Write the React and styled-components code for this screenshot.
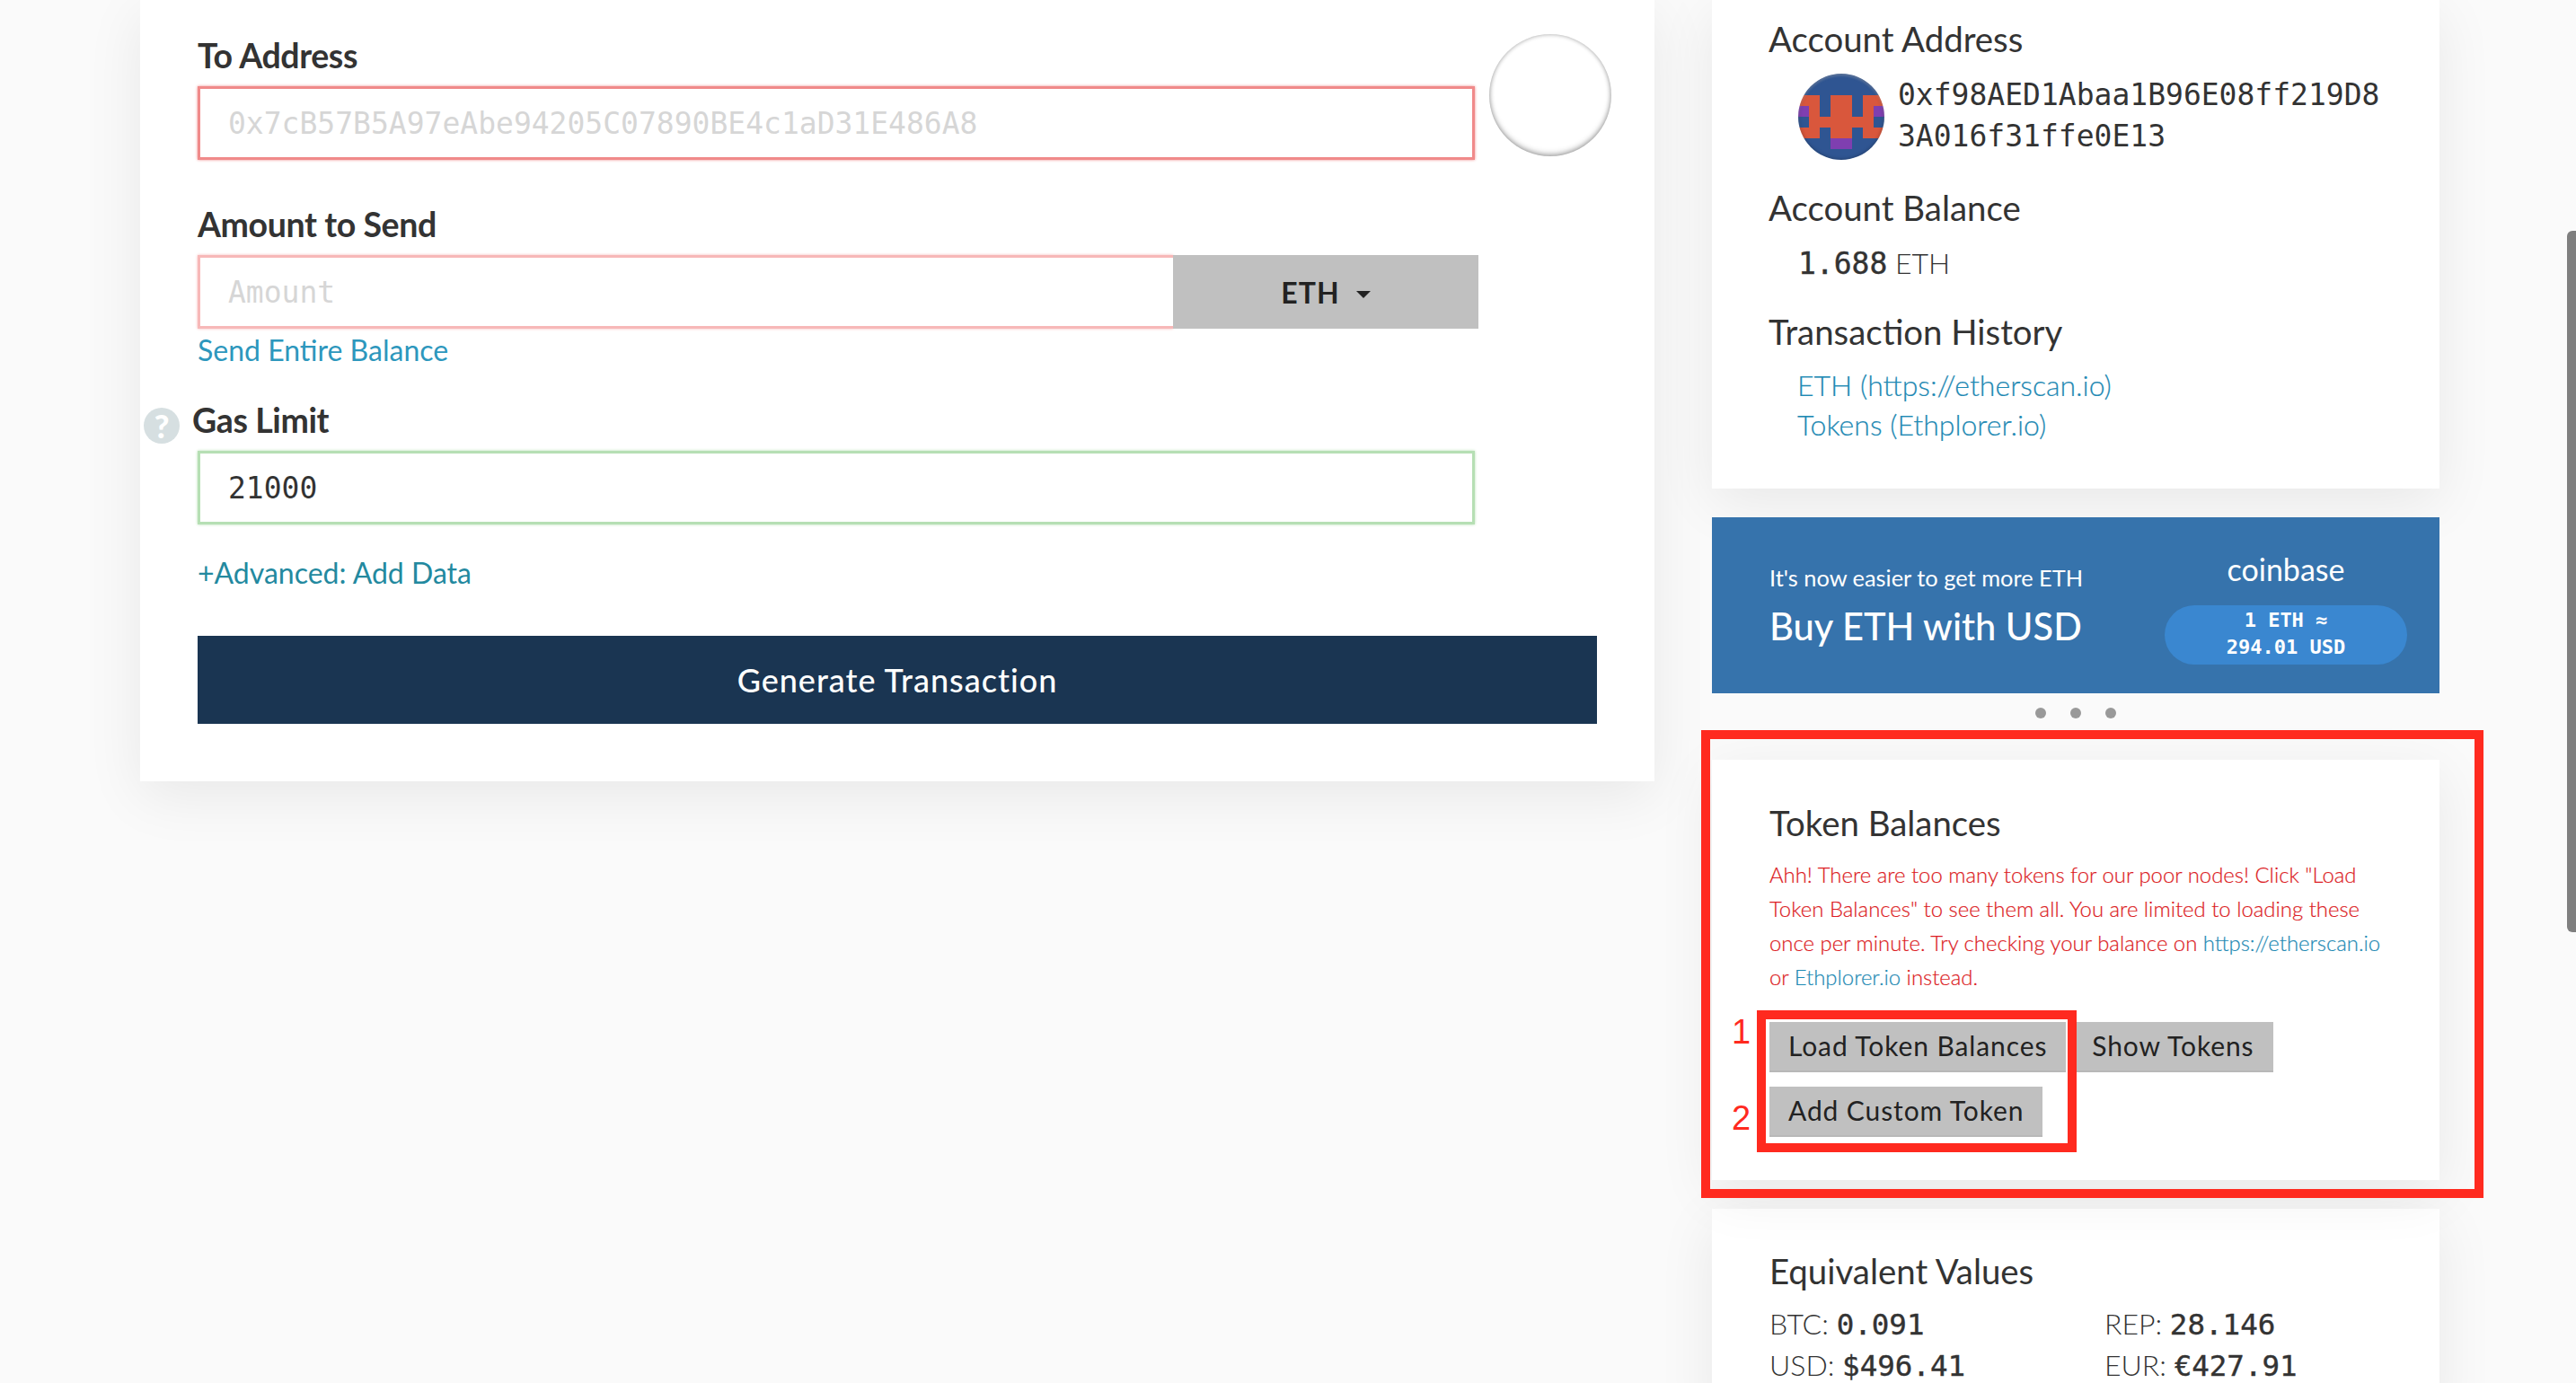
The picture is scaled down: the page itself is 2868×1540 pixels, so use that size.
import React from 'react';
import styled, { createGlobalStyle } from 'styled-components';

const lato = `Lato, "Open Sans", sans-serif`;
const mono = `"DejaVu Sans Mono", "Liberation Mono", monospace`;
const linkBlue = '#2d97bd';
const marker = '#ff2a1f';

const GlobalStyle = createGlobalStyle`
  html, body {
    margin: 0;
    height: 1540px;
    overflow: hidden;
    background: #fafafa;
  }
  * { box-sizing: border-box; }
`;

const Page = styled.div`
  display: grid;
  grid-template-columns: 1686px 810px;
  column-gap: 64px;
  align-items: start;
  padding-left: 156px;
  height: 1540px;
  overflow: hidden;
  font-family: ${lato};
  color: #333;
`;

const Card = styled.section`
  background: #fff;
  box-shadow: 0 16px 60px rgba(0, 0, 0, 0.075);
`;

const FormCard = styled(Card)`
  padding: 39px 64px 64px;
`;

const Label = styled.label`
  display: block;
  font-size: 37.5px;
  line-height: 46px;
  font-weight: 700;
  letter-spacing: -0.4px;
  margin-top: ${p => p.$top || 0}px;
  margin-bottom: 11px;
`;

const AddressRow = styled.div`
  display: flex;
  align-items: flex-start;
`;

const Blockie = styled.div`
  flex: none;
  width: 136px;
  height: 136px;
  margin: -58px 0 0 16px;
  border-radius: 50%;
  background: #fff;
  box-shadow: inset 0 0 5px rgba(0, 0, 0, 0.3), inset 0 -3px 6px rgba(0, 0, 0, 0.22);
`;

const Field = styled.input`
  display: block;
  flex: none;
  width: ${p => p.$width}px;
  height: 82px;
  padding: 0 31px;
  background: #fff;
  border: 3px solid ${p => p.$tone};
  border-right-width: ${p => (p.$flush ? 0 : 3)}px;
  box-shadow: 0 0 3px ${p => p.$tone};
  border-radius: 0;
  outline: none;
  font-family: ${mono};
  font-size: 33px;
  color: #333;
  &::placeholder { color: #d6d6d6; opacity: 1; }
`;

const InputGroup = styled.div`
  display: flex;
  width: 1426px;
`;

const CurrencyButton = styled.div`
  flex: 1;
  display: flex;
  align-items: center;
  justify-content: center;
  gap: 18px;
  height: 82px;
  background: #c0c0c0;
  font-size: 32px;
  font-weight: 700;
  letter-spacing: 1px;
  color: #222;
`;

const Caret = styled.span`
  width: 0;
  height: 0;
  margin-top: 6px;
  border-left: 8px solid transparent;
  border-right: 8px solid transparent;
  border-top: 8px solid #222;
`;

const TextLink = styled.a`
  display: block;
  font-size: 32px;
  line-height: 48px;
  color: ${p => p.$tone || linkBlue};
  margin-top: ${p => p.$top || 0}px;
`;

const GasRow = styled.div`
  display: flex;
  align-items: flex-start;
  gap: 14px;
  margin: 31px 0 8px -60px;
`;

const HelpBadge = styled.span`
  width: 40px;
  height: 40px;
  margin-top: 9px;
  border-radius: 50%;
  background: #d6dfe1;
  color: #fff;
  font-size: 36px;
  font-weight: 900;
  line-height: 40px;
  text-align: center;
`;

const GasLabel = styled(Label)`
  margin: 0;
`;

const GenerateButton = styled.button`
  display: block;
  width: 100%;
  height: 98px;
  margin-top: 46px;
  border: 0;
  background: #1a3552;
  color: #fff;
  font-family: ${lato};
  font-size: 36px;
  font-weight: 500;
  letter-spacing: 1px;
`;

const Sidebar = styled.aside`
  display: flex;
  flex-direction: column;
`;

const AccountCard = styled(Card)`
  padding: 20px 63px 49px;
`;

const Heading = styled.h3`
  margin: ${p => p.$top || 0}px 0 0;
  font-size: 38.4px;
  line-height: 46px;
  font-weight: 400;
  color: #333;
`;

const AccountRow = styled.div`
  display: flex;
  gap: 15px;
  margin: 16px 0 0 33px;
`;

const Identicon = styled.div`
  position: relative;
  width: 96px;
  height: 96px;
  flex: none;
  border-radius: 50%;
  overflow: hidden;
  &::after {
    content: '';
    position: absolute;
    inset: 0;
    border-radius: 50%;
    box-shadow: inset 0 0 4px rgba(0, 0, 0, 0.35), inset 0 2px 3px rgba(255, 255, 255, 0.3);
  }
`;

const AddressText = styled.div`
  width: 545px;
  margin-top: 1px;
  font-family: ${mono};
  font-size: 33px;
  line-height: 46px;
  word-break: break-all;
  color: #333;
`;

const BalanceRow = styled.div`
  margin: 16px 0 0 33px;
  font-size: 32px;
  line-height: 46px;
  font-weight: 300;
`;

const Mono = styled.span`
  font-family: ${mono};
  font-size: ${p => p.$size || 32.5}px;
  line-height: 1;
  font-weight: 400;
  -webkit-text-stroke: 0.4px #333;
  color: #333;
`;

const LinkList = styled.div`
  margin: 15px 0 0 32px;
`;

const ThinLink = styled.a`
  display: block;
  font-size: 32px;
  line-height: 44px;
  font-weight: 300;
  -webkit-text-stroke: 0.2px #1f8ab4;
  color: #1f8ab4;
`;

const Banner = styled.div`
  display: flex;
  justify-content: space-between;
  height: 196px;
  margin-top: 32px;
  padding: 0 36px 0 64px;
  background: #3673ac;
  color: #fff;
`;

const BannerPitch = styled.div`
  padding-top: 47px;
`;

const PitchLine = styled.div`
  font-size: 25.4px;
  line-height: 40px;
  font-weight: 400;
`;

const PitchTitle = styled.div`
  margin-top: 6px;
  font-size: 41.6px;
  line-height: 56px;
  font-weight: 500;
`;

const BannerOffer = styled.div`
  width: 270px;
  padding-top: 36px;
  text-align: center;
`;

const BrandName = styled.div`
  font-size: 34px;
  line-height: 44px;
  font-weight: 400;
`;

const RatePill = styled.div`
  height: 66px;
  margin-top: 18px;
  padding-top: 2px;
  border-radius: 33px;
  background: #3a87d0;
  font-family: ${mono};
  font-size: 22px;
  line-height: 30px;
  font-weight: 700;
`;

const Dots = styled.div`
  display: flex;
  justify-content: center;
  gap: 27px;
  height: 74px;
  padding-top: 16px;
`;

const Dot = styled.span`
  width: 12px;
  height: 12px;
  border-radius: 50%;
  background: #999;
`;

const TokenCard = styled(Card)`
  position: relative;
  padding: 47px 40px 48px 64px;
`;

const Warning = styled.p`
  margin: 16px 0 0;
  font-size: 23.9px;
  line-height: 38px;
  font-weight: 300;
  -webkit-text-stroke: 0.2px #dc1c24;
  color: #dc1c24;
`;

const InlineLink = styled.a`
  -webkit-text-stroke: 0.2px #1f8ab4;
  color: #1f8ab4;
`;

const ButtonWrap = styled.div`
  display: flex;
  flex-wrap: wrap;
  gap: 16px 8px;
  margin-top: 31px;
`;

const GreyButton = styled.button`
  height: 56px;
  padding: 0 21px 2px;
  border: 0;
  border-bottom: 2px solid #b8b8b8;
  background: #c0c0c0;
  color: #222;
  font-family: ${lato};
  font-size: 30px;
  letter-spacing: 0.9px;
`;

const MarkerBox = styled.div`
  position: absolute;
  border: 10px solid ${marker};
  pointer-events: none;
`;

const OuterMarker = styled(MarkerBox)`
  left: -12px;
  right: -49px;
  top: -33px;
  bottom: -20px;
`;

const InnerMarker = styled(MarkerBox)`
  left: 50px;
  top: 279px;
  width: 356px;
  height: 158px;
`;

const MarkerNumber = styled.span`
  position: absolute;
  left: 22px;
  top: ${p => p.$top}px;
  font-family: "Liberation Sans", sans-serif;
  font-size: 38px;
  line-height: 40px;
  color: ${marker};
`;

const EquivalentCard = styled(Card)`
  margin-top: 32px;
  padding: 46px 63px 40px 64px;
`;

const ValueGrid = styled.div`
  display: grid;
  grid-template-columns: 373px 1fr;
  margin-top: 13px;
  font-size: 32px;
  line-height: 46px;
  font-weight: 300;
`;

const Thumb = styled.div`
  position: fixed;
  right: 0;
  top: 257px;
  width: 10px;
  height: 781px;
  border-radius: 6px 0 0 6px;
  background: #7f7f7f;
`;

// 8x8 blockie: b blue, o orange, p purple
const blockie = [
  'bbbbbbbb',
  'bbbbbbbb',
  'oobooboo',
  'poboobop',
  'boooooob',
  'oobooboo',
  'bbbppbbb',
  'bbbbbbbb',
];
const blockieColors = { b: '#2f5592', o: '#d9573c', p: '#7f3fb0' };

const IdenticonArt = () => (
  <svg width="96" height="96" viewBox="0 0 8 8" shapeRendering="crispEdges">
    {blockie.map((row, y) =>
      row.split('').map((c, x) => (
        <rect key={`${x}-${y}`} x={x} y={y} width="1" height="1" fill={blockieColors[c]} />
      ))
    )}
  </svg>
);

const values = [
  ['BTC', '0.091'],
  ['REP', '28.146'],
  ['USD', '$496.41'],
  ['EUR', '€427.91'],
];

export default function App() {
  return (
    <Page>
      <GlobalStyle />
      <FormCard>
        <Label>To Address</Label>
        <AddressRow>
          <Field $width={1422} $tone="#f08a8a" placeholder="0x7cB57B5A97eAbe94205C07890BE4c1aD31E486A8" />
          <Blockie />
        </AddressRow>

        <Label $top={49}>Amount to Send</Label>
        <InputGroup>
          <Field $width={1086} $tone="#f7b8b8" $flush placeholder="Amount" />
          <CurrencyButton>ETH <Caret /></CurrencyButton>
        </InputGroup>
        <TextLink>Send Entire Balance</TextLink>

        <GasRow>
          <HelpBadge>?</HelpBadge>
          <GasLabel>Gas Limit</GasLabel>
        </GasRow>
        <Field $width={1422} $tone="#b6dfb4" defaultValue="21000" />

        <TextLink $tone="#23899f" $top={30}>+Advanced: Add Data</TextLink>
        <GenerateButton>Generate Transaction</GenerateButton>
      </FormCard>

      <Sidebar>
        <AccountCard>
          <Heading>Account Address</Heading>
          <AccountRow>
            <Identicon><IdenticonArt /></Identicon>
            <AddressText>0xf98AED1Abaa1B96E08ff219D83A016f31ffe0E13</AddressText>
          </AccountRow>
          <Heading $top={30}>Account Balance</Heading>
          <BalanceRow><Mono $size={33}>1.688</Mono> ETH</BalanceRow>
          <Heading $top={30}>Transaction History</Heading>
          <LinkList>
            <ThinLink>ETH (https://etherscan.io)</ThinLink>
            <ThinLink>Tokens (Ethplorer.io)</ThinLink>
          </LinkList>
        </AccountCard>

        <Banner>
          <BannerPitch>
            <PitchLine>It's now easier to get more ETH</PitchLine>
            <PitchTitle>Buy ETH with USD</PitchTitle>
          </BannerPitch>
          <BannerOffer>
            <BrandName>coinbase</BrandName>
            <RatePill>1 ETH ≈<br />294.01 USD</RatePill>
          </BannerOffer>
        </Banner>

        <Dots><Dot /><Dot /><Dot /></Dots>

        <TokenCard>
          <Heading>Token Balances</Heading>
          <Warning>
            Ahh! There are too many tokens for our poor nodes! Click "Load Token Balances" to see them all. You are limited to loading these once per minute. Try checking your balance on <InlineLink>https://etherscan.io</InlineLink> or <InlineLink>Ethplorer.io</InlineLink> instead.
          </Warning>
          <ButtonWrap>
            <GreyButton>Load Token Balances</GreyButton>
            <GreyButton>Show Tokens</GreyButton>
            <GreyButton>Add Custom Token</GreyButton>
          </ButtonWrap>
          <OuterMarker />
          <InnerMarker />
          <MarkerNumber $top={283}>1</MarkerNumber>
          <MarkerNumber $top={379}>2</MarkerNumber>
        </TokenCard>

        <EquivalentCard>
          <Heading>Equivalent Values</Heading>
          <ValueGrid>
            {values.map(([name, amount]) => (
              <div key={name}>{name}: <Mono>{amount}</Mono></div>
            ))}
          </ValueGrid>
        </EquivalentCard>
      </Sidebar>
      <Thumb />
    </Page>
  );
}
